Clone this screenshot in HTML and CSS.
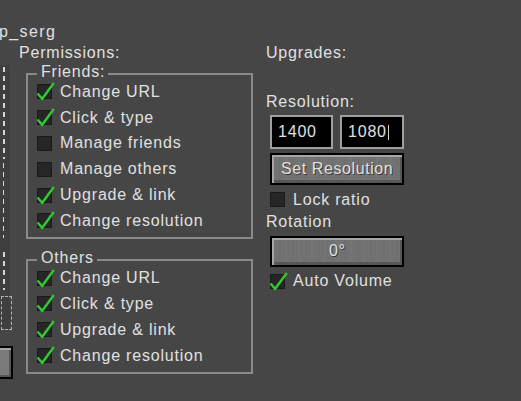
FILE: index.html
```html
<!DOCTYPE html>
<html>
<head>
<meta charset="utf-8">
<link rel="stylesheet" href="styles.css">
</head>
<body>
<div class="screen">
  <div class="title">p_serg</div>
  <div class="main">
    <div class="side">
      <div class="strip">
        <div class="dash seg1"></div>
        <div class="seg2">
          <div class="dash seg2a"></div>
          <div class="dots seg2b"></div>
        </div>
        <div class="dash seg3"></div>
        <div class="seg4"></div>
      </div>
      <div class="stub-btn"></div>
    </div>

    <div class="perms">
      <div class="label">Permissions:</div>

      <div class="group friends">
        <div class="legend">Friends:</div>
        <div class="row"><span class="box on"><svg viewBox="0 0 20 20"><path d="M1.5 12.5 L6.2 17.8 L17.8 2"/></svg></span><span>Change URL</span></div>
        <div class="row"><span class="box on"><svg viewBox="0 0 20 20"><path d="M1.5 12.5 L6.2 17.8 L17.8 2"/></svg></span><span>Click &amp; type</span></div>
        <div class="row"><span class="box"></span><span>Manage friends</span></div>
        <div class="row"><span class="box"></span><span>Manage others</span></div>
        <div class="row"><span class="box on"><svg viewBox="0 0 20 20"><path d="M1.5 12.5 L6.2 17.8 L17.8 2"/></svg></span><span>Upgrade &amp; link</span></div>
        <div class="row"><span class="box on"><svg viewBox="0 0 20 20"><path d="M1.5 12.5 L6.2 17.8 L17.8 2"/></svg></span><span>Change resolution</span></div>
      </div>

      <div class="group others">
        <div class="legend">Others</div>
        <div class="row"><span class="box on"><svg viewBox="0 0 20 20"><path d="M1.5 12.5 L6.2 17.8 L17.8 2"/></svg></span><span>Change URL</span></div>
        <div class="row"><span class="box on"><svg viewBox="0 0 20 20"><path d="M1.5 12.5 L6.2 17.8 L17.8 2"/></svg></span><span>Click &amp; type</span></div>
        <div class="row"><span class="box on"><svg viewBox="0 0 20 20"><path d="M1.5 12.5 L6.2 17.8 L17.8 2"/></svg></span><span>Upgrade &amp; link</span></div>
        <div class="row"><span class="box on"><svg viewBox="0 0 20 20"><path d="M1.5 12.5 L6.2 17.8 L17.8 2"/></svg></span><span>Change resolution</span></div>
      </div>
    </div>

    <div class="upgrades">
      <div class="label">Upgrades:</div>
      <div class="label res-label">Resolution:</div>
      <div class="inputs">
        <div class="field w1">1400</div>
        <div class="field w2">1080<span class="caret"></span></div>
      </div>
      <div class="btn set-btn">Set Resolution</div>
      <div class="row small lock"><span class="box"></span><span>Lock ratio</span></div>
      <div class="label rot-label">Rotation</div>
      <div class="btn rot-btn">0°</div>
      <div class="row small auto"><span class="box on"><svg viewBox="0 0 20 20"><path d="M1.5 12.5 L6.2 17.8 L17.8 2"/></svg></span><span>Auto Volume</span></div>
    </div>
  </div>
</div>
</body>
</html>
```

FILE: styles.css
```css
* {
  box-sizing: border-box;
  margin: 0;
  padding: 0;
}

body {
  margin: 0;
  width: 521px;
  height: 401px;
  overflow: hidden;
  background: #464646;
  color: #e0e0e0;
  font-family: "Liberation Sans", Arial, sans-serif;
  font-size: 16px;
  line-height: 16px;
  letter-spacing: 0.8px;
}

.screen {
  padding-top: 24px;
}

.title {
  height: 16px;
  margin-left: -1px;
  letter-spacing: 1.4px;
}

.main {
  display: flex;
  padding-top: 5px;
}

/* clipped list on the far left */
.side {
  width: 19px;
  flex: none;
  display: flex;
  flex-direction: column;
}

.strip {
  margin-top: 20px;
  width: 10px;
  height: 265px;
  background: #3f3f3f;
  display: flex;
  flex-direction: column;
}

.dash {
  width: 2px;
  margin-left: 3px;
  background: repeating-linear-gradient(to bottom, #d6d6d6 0 5px, transparent 5px 9px);
}

.seg1 {
  margin-top: 2px;
  height: 93px;
}

.seg2 {
  display: flex;
  align-items: flex-start;
}

.seg2a {
  height: 75px;
  margin-top: 4px;
}

.dots {
  width: 1px;
  margin-left: 6px;
  margin-top: 8px;
  background: repeating-linear-gradient(to bottom, #a8a8a8 0 1px, transparent 1px 3px);
}

.seg2b {
  height: 52px;
}

.seg3 {
  margin-top: 14px;
  height: 38px;
}

.seg4 {
  margin-top: 6px;
  margin-left: 1px;
  width: 11px;
  height: 34px;
  border: 1px dashed #b5b5b5;
}

.stub-btn {
  margin-top: 16px;
  margin-left: -21px;
  width: 34px;
  height: 33px;
  border: 2px solid #000;
  background: #7a7a7a;
  box-shadow: inset 2px 2px 0 #a6a6a6, inset -2px -2px 0 #555;
}

/* permissions column */
.perms {
  width: 234px;
  flex: none;
}

.label {
  height: 16px;
  white-space: nowrap;
}

.group {
  margin-left: 7px;
  width: 227px;
  border: 2px solid #8a8a8a;
  padding: 0 0 3.5px 9px;
}

.friends {
  margin-top: 12px;
}

.others {
  margin-top: 20px;
}

.legend {
  width: fit-content;
  margin: -11px 0 -1px 0;
  padding: 0 3px 0 4px;
  background: #464646;
  height: 16px;
}

.row {
  display: flex;
  align-items: center;
  gap: 8px;
  height: 25.8px;
  white-space: nowrap;
}

.box {
  position: relative;
  flex: none;
  width: 15px;
  height: 15px;
  background: #262626;
  border: 1px solid #1a1a1a;
}

.box svg {
  position: absolute;
  left: -2px;
  top: -4px;
  width: 20px;
  height: 20px;
  overflow: visible;
}

.box path {
  fill: none;
  stroke: #34c834;
  stroke-width: 2.4;
  stroke-linejoin: miter;
}

/* upgrades column */
.upgrades {
  margin-left: 13px;
  flex: none;
  width: 160px;
  display: flex;
  flex-direction: column;
  align-items: flex-start;
}

.res-label {
  margin-top: 32.7px;
}

.inputs {
  margin-top: 5.3px;
  margin-left: 4px;
  display: flex;
  gap: 7px;
}

.field {
  height: 34.3px;
  border: 2px solid #a0a0a0;
  background: #000;
  display: flex;
  align-items: center;
  padding-left: 6px;
  color: #e0e0e0;
}

.w1 {
  width: 63px;
}

.w2 {
  width: 64px;
}

.caret {
  display: inline-block;
  width: 1px;
  height: 15px;
  margin-left: 1px;
  background: #d0d0d0;
}

.btn {
  margin-left: 4px;
  width: 134.3px;
  display: flex;
  align-items: center;
  justify-content: center;
  border: 2px solid #000;
  background-color: #727272;
  background-image:
    repeating-linear-gradient(90deg, rgba(255,255,255,0.025) 0 2px, transparent 2px 7px, rgba(0,0,0,0.025) 7px 9px, transparent 9px 13px);
  box-shadow: inset 2px 2px 0 #a6a6a6, inset -2px -3px 0 #575757;
  color: #e0e0e0;
  letter-spacing: 0.6px;
  text-shadow: 1px 1px 0 #3a3a3a;
}

.set-btn {
  margin-top: 4px;
  height: 31.4px;
}

.small {
  height: 16px;
  margin-left: 4px;
}

.lock {
  margin-top: 7.3px;
}

.rot-label {
  margin-top: 6px;
}

.rot-btn {
  margin-top: 5.7px;
  height: 31px;
}

.auto {
  margin-top: 6.8px;
}
```
